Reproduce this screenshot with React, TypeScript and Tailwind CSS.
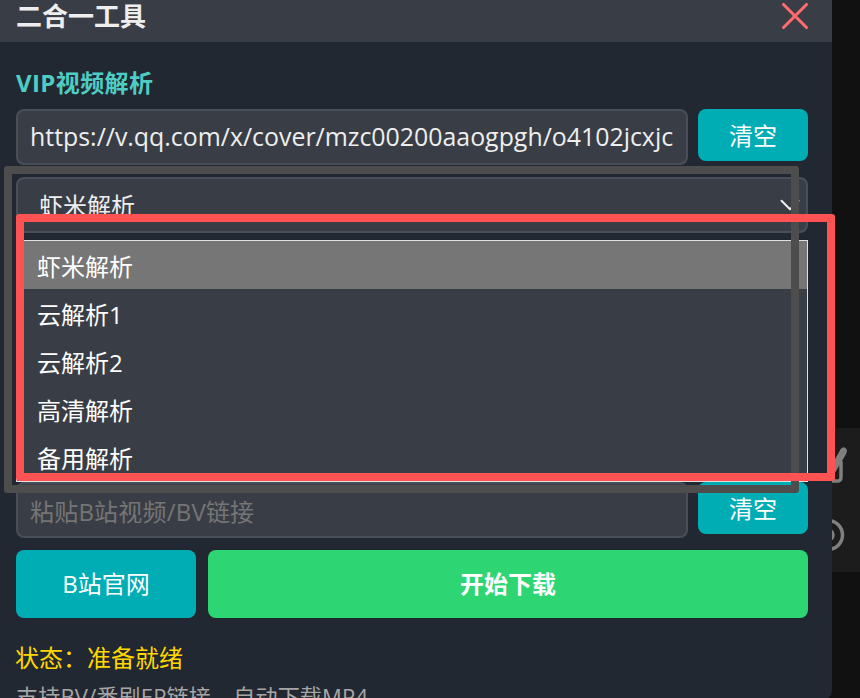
import React from 'react';
import { ChevronDown, X } from 'lucide-react';

const font = 'font-["Open_Sans","Noto_Sans_CJK_SC",sans-serif]';
const options = ['虾米解析', '云解析1', '云解析2', '高清解析', '备用解析'];

function ClearButton() {
  return (
    <button className="h-[52px] w-[110px] shrink-0 rounded-lg bg-[#00adb5] pt-[2px] text-[24px] text-white">
      清空
    </button>
  );
}

export default function App() {
  return (
    <div className={`relative h-[698px] w-[860px] overflow-hidden bg-[#111111] ${font}`}>
      {/* 오른쪽 뒤 패널 */}
      <div className="absolute left-[820px] top-[428px] h-[144px] w-[40px] bg-[#1c1c1c]">
        <svg viewBox="0 0 40 144" className="h-[144px] w-[40px]" fill="none" stroke="#808080" strokeWidth="3.5" strokeLinecap="round">
          <path d="M12 40 L21 24 C22 21 24 20.5 25 22 C25.5 23 25 24.5 24 26 L14 43" />
          <path d="M21 34 V49 C21 52 20 53 17 53 H12" />
          <circle cx="8" cy="107" r="14.5" />
          <circle cx="8" cy="107" r="5" />
        </svg>
      </div>

      {/* 모달 */}
      <div className="relative h-[702px] w-[832px] rounded-br-xl bg-[#222831]">
        <div className="flex h-[42px] items-start justify-between bg-[#393e46] pl-4 pr-[14px]">
          <span className="text-[26px] font-bold leading-[32px] text-[#eeeeee]">二合一工具</span>
          <X className="-mt-[7px] h-[46px] w-[46px] text-[#ff6b6b]" strokeWidth={1.6} />
        </div>

        <div className="px-4">
          <div className="mt-[25px] text-[24px] font-bold leading-[32px] tracking-[0.4px] text-[#4ecdc4]">VIP视频解析</div>

          <div className="mt-[10px] flex items-start gap-[10px]">
            <div className="flex h-[56px] w-[672px] items-center whitespace-nowrap rounded-lg border-2 border-[#4a4e5a] bg-[#393e46] px-3 text-[24.9px] text-[#eeeeee]">
              https://v.qq.com/x/cover/mzc00200aaogpgh/o4102jcxjc
            </div>
            <ClearButton />
          </div>

          <div className="mt-3 flex h-[56px] w-[792px] items-center justify-between rounded-lg border-2 border-[#4a4e5a] bg-[#393e46] pl-[21px] text-[24px] text-[#eeeeee]">
            <span className="pt-[2px]">虾米解析</span>
            <ChevronDown className="-mr-[1px] h-[34px] w-[34px]" strokeWidth={1.4} />
          </div>

          <div className="mt-[249px] flex items-start gap-[10px]">
            <div className="flex h-[56px] w-[672px] items-center rounded-lg border-2 border-[#4a4e5a] bg-[#393e46] px-3 pt-[3px] text-[24px] tracking-[0.2px] text-[#757575]">
              粘贴B站视频/BV链接
            </div>
            <ClearButton />
          </div>

          <div className="mt-3 flex gap-3">
            <button className="h-[68px] w-[180px] rounded-lg bg-[#00adb5] text-[24px] text-white">B站官网</button>
            <button className="h-[68px] w-[600px] rounded-lg bg-[#2ed573] text-[24px] font-bold text-white">开始下载</button>
          </div>

          <div className="-ml-[1px] mt-[24px] text-[24px] leading-[32px] text-[#ffd700]">状态：准备就绪</div>
          <div className="mt-[7px] whitespace-nowrap text-[22px] leading-[30px] tracking-[0.2px] text-[#a6a6a6]">支持BV/番剧EP链接，自动下载MP4</div>
        </div>
      </div>

      {/* 펼친 드롭다운 */}
      <div className="absolute left-[16px] top-[240px] h-[242px] w-[792px] overflow-hidden border border-[#e0e0e0] bg-[#393e46] text-[24px] text-white">
        {options.map((o, i) => (
          <div key={o} className={`flex h-[48px] items-center pl-[20px] pt-[3px] ${i === 0 ? 'bg-[#767676]' : ''}`}>
            {o}
          </div>
        ))}
      </div>

      {/* 주석 사각형 */}
      <div className="absolute left-[4px] top-[166px] h-[327px] w-[795px] rounded-[3px] border-[8px] border-[#4d4d4d]" />
      <div className="absolute left-[16px] top-[214px] h-[267px] w-[819px] rounded-[3px] border-[8px] border-[#ff5252]" />
    </div>
  );
}
